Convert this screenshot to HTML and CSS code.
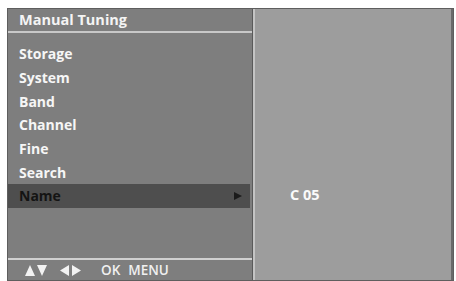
FILE: index.html
```html
<!DOCTYPE html>
<html>
<head>
<meta charset="utf-8">
<link rel="stylesheet" href="styles.css">
</head>
<body>
<div class="screen">
  <div class="menu">
    <div class="title">Manual Tuning</div>
    <ul class="items">
      <li>Storage</li>
      <li>System</li>
      <li>Band</li>
      <li>Channel</li>
      <li>Fine</li>
      <li>Search</li>
      <li class="active">Name<svg class="arrow" width="8" height="8" viewBox="0 0 8 8"><path d="M0 0 L8 4 L0 8 Z"/></svg></li>
    </ul>
    <div class="footer">
      <svg class="keys" width="23" height="11" viewBox="0 0 23 11"><path d="M0 11 L5 0 L10 11 Z M12 0 L22 0 L17 11 Z"/></svg>
      <svg class="keys lr" width="21" height="11" viewBox="0 0 21 11"><path d="M0 5.5 L9 0 L9 11 Z M12 0 L21 5.5 L12 11 Z"/></svg>
      <span class="ok">OK</span>
      <span>MENU</span>
    </div>
  </div>
  <div class="detail">
    <div class="value">C 05</div>
  </div>
</div>
</body>
</html>
```
FILE: styles.css
```css
html, body {
  margin: 0;
  padding: 0;
  background: #ffffff;
}
body {
  width: 456px;
  height: 281px;
  font-family: "Open Sans", "Liberation Sans", sans-serif;
}
.screen {
  display: flex;
  margin: 8px 2px 2px 7px;
  height: 271px;
  border: 1px solid #5e5e5e;
  background: #7e7e7e;
}
.menu {
  width: 244px;
  display: flex;
  flex-direction: column;
  border-right: 1px solid #5a5a5a;
}
.title {
  height: 22px;
  line-height: 21px;
  padding-left: 11px;
  color: #f4f4f4;
  font-weight: 700;
  font-size: 14.5px;
  border-bottom: 2px solid #c8c8c8;
}
.items {
  list-style: none;
  margin: 0;
  padding: 9px 0 0 0;
  flex: 1;
}
.items li {
  height: 23.7px;
  line-height: 23px;
  padding-left: 11px;
  color: #f6f6f6;
  font-weight: 700;
  font-size: 14px;
  display: flex;
  align-items: center;
}
.items li.active {
  background: #4e4e4e;
  color: #141414;
  margin-right: 2px;
}
.arrow {
  margin-left: auto;
  margin-right: 8px;
  fill: #1a1a1a;
}
.footer {
  height: 20px;
  border-top: 2px solid #d0d0d0;
  display: flex;
  align-items: center;
  padding-left: 17px;
  color: #f0f0f0;
  font-size: 13.5px;
  font-weight: 600;
}
.footer .keys {
  fill: #f2f2f2;
  margin-right: 12px;
}
.footer .lr {
  margin-right: 0;
}
.footer .ok {
  margin-left: 20px;
  margin-right: 8px;
}
.detail {
  flex: 1;
  background: #9d9d9d;
  border-left: 2px solid #c4c4c4;
  border-right: 2px solid #6a6a6a;
}
.value {
  margin: 176px 0 0 35px;
  color: #fafafa;
  font-weight: 700;
  font-size: 14.5px;
}
```
